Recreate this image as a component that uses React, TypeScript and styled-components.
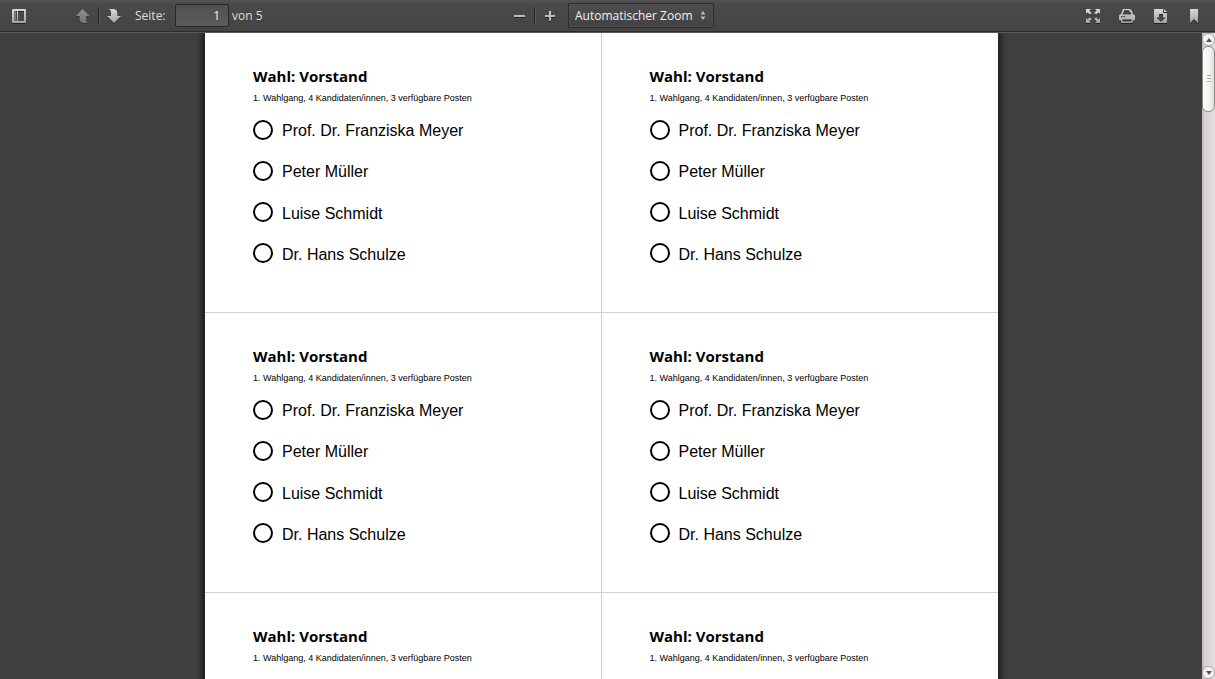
import React from 'react';
import styled, { createGlobalStyle } from 'styled-components';

const GlobalStyle = createGlobalStyle`
  * { box-sizing: border-box; }
  body { margin: 0; background: #404040; font-family: "Liberation Sans", Arial, sans-serif; }
`;

const Viewer = styled.div`
  display: flex;
  flex-direction: column;
  height: 100vh;
  overflow: hidden;
`;

const Toolbar = styled.header`
  flex: none;
  display: grid;
  grid-template-columns: 1fr auto 1fr;
  align-items: center;
  height: 33px;
  padding: 0 3px 1px 5px;
  background: linear-gradient(#535353, #4a4a4a 4px, #444 30px);
  border-bottom: 1px solid #5a5a5a;
  box-shadow: inset 0 -1px 0 #2c2c2c, 0 1px 3px rgba(0, 0, 0, 0.3);
  color: #dcdcdc;
  font: 12px/20px "Open Sans", "Noto Sans", sans-serif;
`;

const Group = styled.div<{ $align?: string; $inset?: number }>`
  display: flex;
  align-items: center;
  justify-content: ${(p) => p.$align ?? 'flex-start'};
  padding-left: ${(p) => p.$inset ?? 0}px;
`;

const ToolButton = styled.button<{ $wide?: boolean; $spaced?: boolean }>`
  display: flex;
  align-items: center;
  justify-content: center;
  width: ${(p) => (p.$wide ? 34 : 28)}px;
  height: 24px;
  margin: 0 ${(p) => (p.$spaced ? 36 : 0)}px 0 0;
  padding: 0;
  border: 0;
  background: none;
  &:disabled { opacity: 0.5; }
  svg { display: block; filter: drop-shadow(0 1px 0 rgba(0, 0, 0, 0.5)); }
`;

const Separator = styled.span`
  width: 1px;
  height: 17px;
  margin: 0 1px;
  background: #222;
  box-shadow: 1px 0 0 #5c5c5c;
`;

const PageLabel = styled.label`
  width: 40px;
  margin-left: 7px;
`;

const PageInput = styled.input`
  width: 54px;
  height: 23px;
  margin-right: 3px;
  padding: 0 8px;
  border: 1px solid #272727;
  border-radius: 2px;
  background: linear-gradient(#505050, #5c5c5c);
  color: #f2f2f2;
  font: inherit;
  text-align: right;
`;

const SelectBox = styled.div`
  position: relative;
  width: 146px;
  margin-left: 4px;
  svg { position: absolute; right: 8px; top: 8px; pointer-events: none; }
`;

const ZoomSelect = styled.select`
  display: block;
  width: 100%;
  height: 25px;
  padding: 0 6px;
  appearance: none;
  border: 1px solid #2b2b2b;
  border-radius: 2px;
  background: linear-gradient(#4e4e4e, #424242);
  box-shadow: inset 0 0 0 1px #505050;
  color: #f2f2f2;
  font: inherit;
`;

const Body = styled.div`
  flex: 1;
  display: flex;
  min-height: 0;
`;

const Canvas = styled.main`
  flex: 1;
  min-width: 0;
  padding-left: 1px;
  overflow: hidden;
  background: #404040;
`;

const Sheet = styled.div`
  display: grid;
  grid-template-columns: 1fr 1fr;
  grid-auto-rows: 280px;
  width: 100%;
  max-width: 793px;
  margin: 0 auto;
  background: #fff;
  color: #000;
  box-shadow: 0 0 8px 2px rgba(0, 0, 0, 0.75);
`;

const BallotCard = styled.section`
  padding: 33px 48px 0;
  border-bottom: 1px solid #d0d0d0;
  &:nth-child(odd) { border-right: 1px solid #d0d0d0; }
`;

const Title = styled.h2`
  margin: 0 0 6px;
  font: bold 15px/20px "Open Sans", "Noto Sans", sans-serif;
`;

const Subtitle = styled.p`
  margin: 0 0 14px;
  font-size: 9px;
  line-height: 12px;
  white-space: nowrap;
`;

const Candidates = styled.div`
  display: flex;
  flex-direction: column;
  justify-content: space-between;
  height: 147px;
`;

const Candidate = styled.label`
  display: flex;
  align-items: center;
  gap: 9px;
  font-size: 16px;
  line-height: 21px;
  white-space: nowrap;
  span { padding-top: 2px; }
`;

const Mark = styled.input`
  appearance: none;
  flex: none;
  width: 20px;
  height: 20px;
  margin: 0;
  border: 2px solid #000;
  border-radius: 50%;
  &:checked { background: #000; }
`;

const Scrollbar = styled.aside`
  flex: none;
  display: flex;
  flex-direction: column;
  width: 13px;
  background: linear-gradient(90deg, #bdb9b6, #d6d2d0 3px, #e2dfdd);
`;

const ScrollButton = styled.button`
  flex: none;
  display: flex;
  align-items: center;
  justify-content: center;
  height: 13px;
  padding: 0;
  border: 1px solid #aaa6a2;
  border-radius: 6px;
  background: #f3f2f1;
`;

const Thumb = styled.div`
  flex: none;
  display: flex;
  align-items: center;
  justify-content: center;
  height: 66px;
  border: 1px solid #8e8a86;
  border-radius: 6px;
  background: linear-gradient(90deg, #fff, #f4f3f2 60%, #dedbd8);
`;

const Track = styled.div`
  flex: 1;
`;

const Metal = () => (
  <defs>
    <linearGradient id="metal" gradientUnits="userSpaceOnUse" x1="0" y1="1" x2="0" y2="15">
      <stop offset="0" stopColor="#d8d8d8" />
      <stop offset="1" stopColor="#a2a2a2" />
    </linearGradient>
  </defs>
);

const Icon = ({ children }: { children: React.ReactNode }) => (
  <svg width={16} height={16} viewBox="0 0 16 16" fill="url(#metal)" aria-hidden="true">
    <Metal />
    {children}
  </svg>
);

const candidates = ['Prof. Dr. Franziska Meyer', 'Peter Müller', 'Luise Schmidt', 'Dr. Hans Schulze'];

const Ballot = () => (
  <BallotCard>
    <Title>Wahl: Vorstand</Title>
    <Subtitle>1. Wahlgang, 4 Kandidaten/innen, 3 verfügbare Posten</Subtitle>
    <Candidates>
      {candidates.map((name) => (
        <Candidate key={name}>
          <Mark type="checkbox" />
          <span>{name}</span>
        </Candidate>
      ))}
    </Candidates>
  </BallotCard>
);

export default function App() {
  return (
    <Viewer>
      <GlobalStyle />
      <Toolbar>
        <Group>
          <ToolButton $spaced aria-label="Seitenleiste">
            <Icon>
              <path fillRule="evenodd" d="M2 1h12a1 1 0 0 1 1 1v12a1 1 0 0 1-1 1H2a1 1 0 0 1-1-1V2a1 1 0 0 1 1-1zM3 3v10h3V3zM7 3v10h6V3z" />
              <path d="M3 3h2v10H3z" opacity=".5" />
            </Icon>
          </ToolButton>
          <ToolButton disabled aria-label="Vorherige Seite">
            <Icon>
              <path d="M7.500 1L14.500 8H11v3c0 1.700.6 2.900 2 4H9c-2.700 0-4.300-1.500-4.300-4V8H1z" />
            </Icon>
          </ToolButton>
          <Separator />
          <ToolButton aria-label="Nächste Seite">
            <Icon>
              <path d="M8 15L1 8h4V5c0-1.700-.6-2.900-2-4h4c2.700 0 4.300 1.500 4.300 4v3H15z" />
            </Icon>
          </ToolButton>
          <PageLabel htmlFor="page">Seite:</PageLabel>
          <PageInput id="page" type="text" defaultValue="1" />
          <span>von 5</span>
        </Group>
        <Group $inset={2}>
          <ToolButton aria-label="Verkleinern">
            <Icon><path d="M3 7h11v2H3z" /></Icon>
          </ToolButton>
          <Separator />
          <ToolButton aria-label="Vergrößern">
            <Icon><path d="M7 3h2v4h4v2H9v4H7V9H3V7h4z" /></Icon>
          </ToolButton>
          <SelectBox>
            <ZoomSelect aria-label="Zoom" defaultValue="auto">
              <option value="auto">Automatischer Zoom</option>
              <option value="page">Seitengröße</option>
            </ZoomSelect>
            <svg width="6" height="9" viewBox="0 0 6 9" fill="#bbb" aria-hidden="true">
              <path d="M3 0l2.500 3.500h-5zM3 9l2.500-3.500h-5z" />
            </svg>
          </SelectBox>
        </Group>
        <Group $align="flex-end">
          <ToolButton $wide aria-label="Vollbild">
            <Icon>
              <path d="M1 1h5L4.400 2.600l2.300 2.300-1.800 1.800-2.300-2.300L1 6zM15 1v5l-1.600-1.600-2.300 2.300-1.800-1.800 2.300-2.300L10 1zM1 15v-5l1.600 1.600 2.300-2.300 1.800 1.800-2.300 2.300L6 15zM15 15h-5l1.600-1.600-2.300-2.300 1.800-1.800 2.300 2.300L15 10z" />
            </Icon>
          </ToolButton>
          <ToolButton $wide aria-label="Drucken">
            <Icon>
              <path fillRule="evenodd" d="M4 1h7l2.500 2.500V6C15 6 16 7 16 8v3c0 1-.5 1.500-1.500 1.500H14V14l-1 1H3l-1-1v-1.500h-.5C.5 12.500 0 12 0 11V8c0-1 .8-2 2-2zM5.200 2.300L3.600 6.500H12V4.200h-1.600V2.300zM3.500 11.500v2h9v-2zM2 8v1.300h1.300V8zM4.500 8v1.300h1.300V8z" />
            </Icon>
          </ToolButton>
          <ToolButton $wide aria-label="Herunterladen">
            <Icon>
              <path fillRule="evenodd" d="M2 1h8v4h4v9a1 1 0 0 1-1 1H2a1 1 0 0 1-1-1V2a1 1 0 0 1 1-1zM6 6v3.500H3.500L8 14l4.500-4.500H10V6z" />
              <path d="M11 1l3 3h-3z" />
            </Icon>
          </ToolButton>
          <ToolButton $wide aria-label="Lesezeichen">
            <Icon><path d="M3 1h8v14l-4-4-4 4z" /></Icon>
          </ToolButton>
        </Group>
      </Toolbar>
      <Body>
        <Canvas>
          <Sheet>
            {Array.from({ length: 6 }, (_, i) => <Ballot key={i} />)}
          </Sheet>
        </Canvas>
        <Scrollbar aria-label="Bildlaufleiste">
          <ScrollButton aria-label="Nach oben">
            <svg width="6" height="4" fill="#555"><path d="M3 0l3 4H0z" /></svg>
          </ScrollButton>
          <Thumb>
            <svg width="4" height="8" fill="#aaa"><path d="M0 0h4v1H0zM0 3h4v1H0zM0 6h4v1H0z" /></svg>
          </Thumb>
          <Track />
          <ScrollButton aria-label="Nach unten">
            <svg width="6" height="4" fill="#555"><path d="M0 0h6L3 4z" /></svg>
          </ScrollButton>
        </Scrollbar>
      </Body>
    </Viewer>
  );
}
